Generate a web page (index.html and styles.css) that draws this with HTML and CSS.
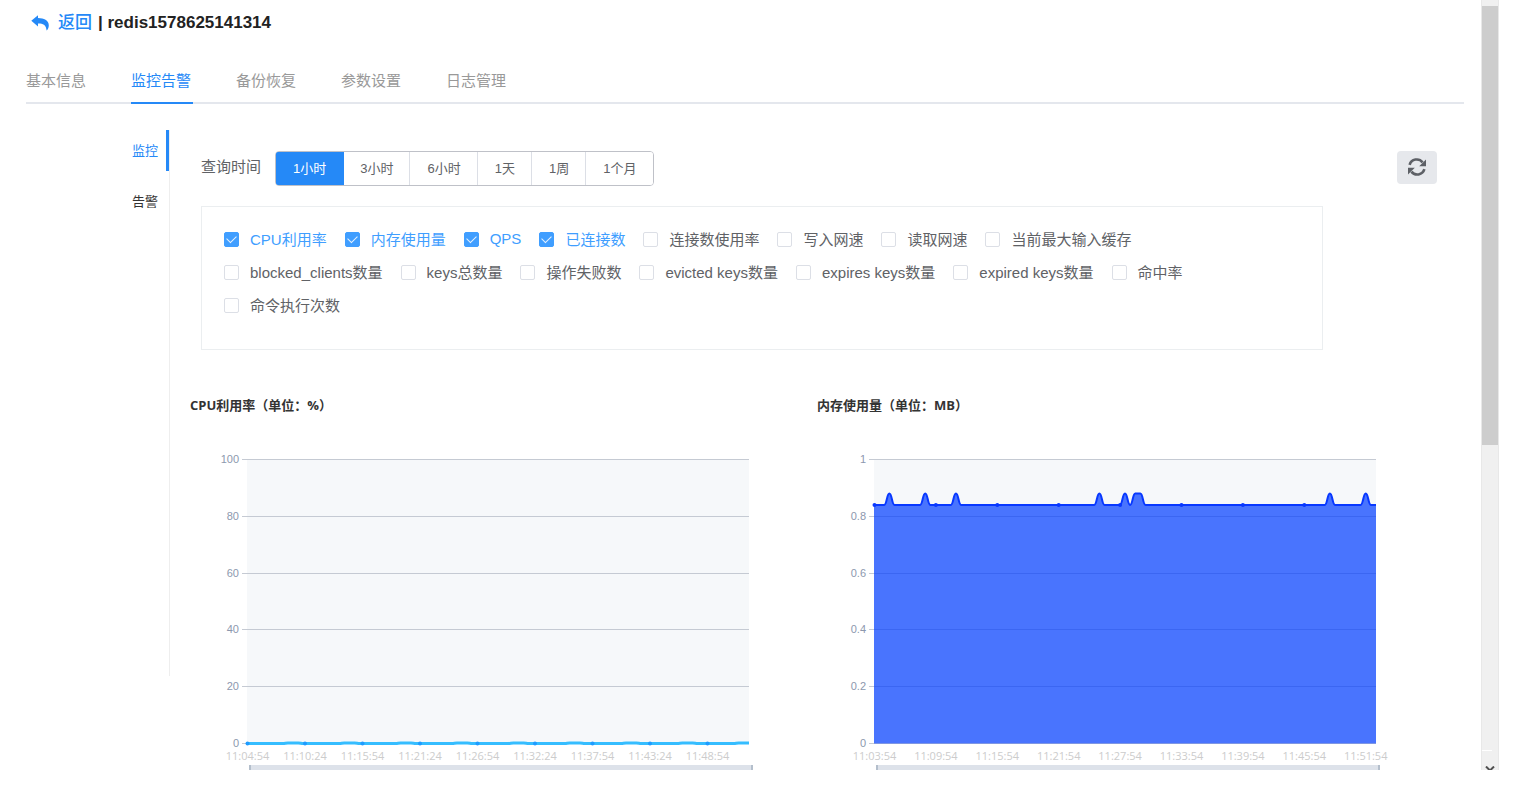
FILE: index.html
```html
<!DOCTYPE html>
<html lang="zh-CN">
<head>
<meta charset="utf-8">
<title>redis1578625141314</title>
<link rel="stylesheet" href="styles.css">
</head>
<body>
<div class="frame">
  <main class="page">
    <header class="title-bar">
      <a class="back" href="#">
        <svg class="back-icon" viewBox="0 0 18 16" aria-hidden="true"><path d="M7 0.2 L0.3 5.8 L7 11.4 V8.4 C11.4 8.3 15.2 9.2 15.6 15.6 C16.8 14.6 17.8 12.6 17.8 10.2 C17.6 5.2 13 3.2 7 3.1 Z"/></svg>
        <span>返回</span>
      </a>
      <h1 class="instance">| redis1578625141314</h1>
    </header>
    <nav class="tabs">
      <a class="tab" href="#">基本信息</a>
      <a class="tab tab-active" href="#">监控告警</a>
      <a class="tab" href="#">备份恢复</a>
      <a class="tab" href="#">参数设置</a>
      <a class="tab" href="#">日志管理</a>
    </nav>
    <div class="body">
      <nav class="side">
        <a class="side-item side-active" href="#">监控</a>
        <a class="side-item" href="#">告警</a>
      </nav>
      <section class="content">
        <div class="toolbar">
          <span class="toolbar-label">查询时间</span>
          <div class="range">
            <button class="range-btn range-on" type="button">1小时</button>
            <button class="range-btn" type="button">3小时</button>
            <button class="range-btn" type="button">6小时</button>
            <button class="range-btn" type="button">1天</button>
            <button class="range-btn" type="button">1周</button>
            <button class="range-btn" type="button">1个月</button>
          </div>
          <button class="refresh" type="button" aria-label="刷新">
            <svg class="refresh-icon" viewBox="0 0 18 18" aria-hidden="true">
              <path class="arc" d="M1.6 6.8 A7.4 7.4 0 0 1 14.6 4.4"/>
              <path class="arc" d="M16.4 11.2 A7.4 7.4 0 0 1 3.4 13.6"/>
              <path class="head" d="M18 1.6 V8.2 H11.2 Z"/>
              <path class="head" d="M0 16.4 V9.8 H6.8 Z"/>
            </svg>
          </button>
        </div>
        <div class="metrics">
          <label class="metric"><input type="checkbox" checked><span>CPU利用率</span></label>
          <label class="metric"><input type="checkbox" checked><span>内存使用量</span></label>
          <label class="metric"><input type="checkbox" checked><span>QPS</span></label>
          <label class="metric"><input type="checkbox" checked><span>已连接数</span></label>
          <label class="metric"><input type="checkbox"><span>连接数使用率</span></label>
          <label class="metric"><input type="checkbox"><span>写入网速</span></label>
          <label class="metric"><input type="checkbox"><span>读取网速</span></label>
          <label class="metric"><input type="checkbox"><span>当前最大输入缓存</span></label>
          <label class="metric"><input type="checkbox"><span>blocked_clients数量</span></label>
          <label class="metric"><input type="checkbox"><span>keys总数量</span></label>
          <label class="metric"><input type="checkbox"><span>操作失败数</span></label>
          <label class="metric"><input type="checkbox"><span>evicted keys数量</span></label>
          <label class="metric"><input type="checkbox"><span>expires keys数量</span></label>
          <label class="metric"><input type="checkbox"><span>expired keys数量</span></label>
          <label class="metric"><input type="checkbox"><span>命中率</span></label>
          <label class="metric"><input type="checkbox"><span>命令执行次数</span></label>
        </div>
        <div class="charts">
          <article class="chart">
            <h2 class="chart-title">CPU利用率（单位：%）</h2>
            <svg class="plot" id="cpu" viewBox="0 0 627 360" role="img" aria-label="CPU利用率"></svg>
          </article>
          <article class="chart">
            <h2 class="chart-title">内存使用量（单位：MB）</h2>
            <svg class="plot" id="memory" viewBox="0 0 627 360" role="img" aria-label="内存使用量"></svg>
          </article>
        </div>
      </section>
    </div>
  </main>
  <div class="scrollbar" aria-hidden="true">
    <div class="cap"></div>
    <div class="thumb"></div>
    <div class="seam"></div>
    <svg class="down" viewBox="0 0 10 6"><path d="M1 0.5 L5 4.5 L9 0.5"/></svg>
  </div>
</div>
<script src="charts.js"></script>
</body>
</html>
```

FILE: styles.css
```css
* { box-sizing: border-box; }

body {
  margin: 0;
  height: 100vh;
  padding: 0 21px 28px 0;
  background: #fff;
  color: #606266;
  font-family: "Liberation Sans", "Noto Sans CJK SC", sans-serif;
  font-size: 15px;
  overflow: hidden;
}

a { color: inherit; text-decoration: none; }
button { font-family: inherit; cursor: pointer; }

.frame { display: flex; height: 100%; overflow: hidden; }
.page { flex: 1; min-width: 0; padding: 0 17px 0 26px; }

.title-bar {
  display: flex;
  align-items: center;
  gap: 6px;
  height: 45px;
  padding-left: 5px;
  font-size: 17px;
}
.back { display: flex; align-items: center; gap: 9px; color: #2589f7; font-weight: 500; line-height: 20px; }
.back-icon { width: 18px; height: 16px; fill: #2589f7; }
.instance { margin: 0; color: #222; font-size: 17px; font-weight: 700; line-height: 20px; }

.tabs {
  display: flex;
  gap: 43px;
  height: 59px;
  border-bottom: 2px solid #e4e7ed;
}
.tab {
  min-width: 62px;
  height: 59px;
  padding-top: 25px;
  line-height: 22px;
  color: #999;
}
.tab-active { color: #2589f7; border-bottom: 2px solid #2589f7; }

.body { display: flex; align-items: flex-start; padding-top: 26px; }
.side {
  display: flex;
  flex-direction: column;
  gap: 10px;
  width: 144px;
  min-height: 546px;
  border-right: 1px solid #eee;
}
.side-item {
  height: 41px;
  padding-right: 8px;
  border-right: 3px solid transparent;
  color: #333;
  font-size: 13px;
  line-height: 41px;
  text-align: right;
}
.side-active { color: #2589f7; border-right-color: #2589f7; }

.content { flex: 1; min-width: 0; padding: 21px 20px 0; }

.toolbar { display: flex; align-items: flex-start; padding: 0 7px 0 11px; }
.toolbar-label { width: 74px; line-height: 31px; }
.range {
  display: flex;
  border: 1px solid #bfc1c8;
  border-radius: 4px;
  overflow: hidden;
}
.range-btn {
  height: 33px;
  padding: 0 17px 2px;
  border: 0;
  background: #fff;
  box-shadow: inset -1px 0 #dcdfe6;
  color: #606266;
  font-size: 13px;
}
.range-btn:last-child { box-shadow: none; }
.range-on { position: relative; background: #2589f7; color: #fff; box-shadow: 0 0 0 1px #2589f7; }
.refresh {
  display: flex;
  align-items: center;
  justify-content: center;
  width: 40px;
  height: 33px;
  margin-left: auto;
  padding: 0 0 1px;
  border: 0;
  border-radius: 4px;
  background: #e6e8ec;
}
.refresh-icon { width: 18px; height: 18px; }
.arc { fill: none; stroke: #5d6066; stroke-width: 2.6; }
.head { fill: #5d6066; }

.metrics {
  display: flex;
  flex-wrap: wrap;
  column-gap: 18px;
  margin: 20px 121px 0 11px;
  padding: 16px 22px 27px;
  border: 1px solid #ebeef0;
}
.metric { display: flex; align-items: center; gap: 11px; height: 33px; }
.metric span { padding-bottom: 2px; }
.metric input {
  appearance: none;
  width: 15px;
  height: 15px;
  margin: 0;
  border: 1px solid #dcdfe6;
  border-radius: 2px;
  background: #fff;
}
.metric input:checked { display: grid; place-items: center; border-color: #409eff; background: #409eff; }
.metric input:checked::before {
  content: "";
  width: 8px;
  height: 5px;
  margin-bottom: 3px;
  border: solid #e4f1ff;
  border-width: 0 0 1px 1px;
  rotate: -45deg;
}
.metric input:checked + span { color: #409eff; }

.charts { display: grid; grid-template-columns: 1fr 1fr; margin-top: 45px; }
.chart-title {
  margin: 0;
  color: #333;
  font-family: "Open Sans", "Noto Sans CJK SC", sans-serif;
  font-size: 13px;
  font-weight: 700;
  line-height: 20px;
}
.plot { display: block; width: 100%; margin-top: 15px; }
.plot-bg { fill: #f6f8fa; }
.grid { stroke: #c5cad3; stroke-width: 1; }
.y-label { fill: #8c98ae; font: 11px "Liberation Sans", sans-serif; text-anchor: end; }
.x-label { fill: #ccc; font: 11px "Open Sans", sans-serif; text-anchor: middle; }
.line { fill: none; stroke-width: 2; }
.line-cpu { stroke: #35bdff; stroke-width: 3; }
.dot-cpu { fill: #1f9bff; }
.line-memory { stroke: #0838ff; }
.dot-memory { fill: #0838ff; }
.area-memory { fill: #003cff; fill-opacity: 0.7; }
.zoom-track { fill: #dde2ea; }
.zoom-handle { fill: #b4bfcc; }

.scrollbar {
  position: relative;
  width: 18px;
  border: solid #e8e8e8;
  border-width: 0 1px;
  background: #f0f0f0;
}
.cap { height: 6px; }
.thumb { height: 57%; background: #cdcdcd; }
.seam { position: absolute; left: 0; bottom: 19px; width: 10px; height: 1px; background: #fff; }
.down { position: absolute; left: 3px; bottom: -2px; width: 10px; height: 6px; }
.down path { fill: none; stroke: #505050; stroke-width: 2; }
```

FILE: charts.js
```js
const LEFT = 57, RIGHT = 559, TOP = 29.5, BOTTOM = 313.5;

function draw(id, chart) {
  const y = v => BOTTOM - v / chart.max * (BOTTOM - TOP);
  const out = [`<rect class="plot-bg" x="${LEFT}" y="${TOP}" width="${RIGHT - LEFT}" height="${BOTTOM - TOP}"/>`];
  chart.ticks.forEach(t => {
    const gy = Math.floor(y(t)) + 0.5;
    out.push(`<line class="grid" x1="${LEFT - 5}" x2="${RIGHT}" y1="${gy}" y2="${gy}"/>`);
    out.push(`<text class="y-label" x="${LEFT - 8}" y="${gy + 3.5}">${t}</text>`);
  });
  const last = chart.values.length - 1;
  const x = i => LEFT + i / last * (RIGHT - LEFT);
  let path = `M${x(0)} ${y(chart.values[0])}`;
  for (let i = 1; i <= last; i++) {
    const mid = (x(i - 1) + x(i)) / 2;
    path += ` C${mid} ${y(chart.values[i - 1])} ${mid} ${y(chart.values[i])} ${x(i)} ${y(chart.values[i])}`;
  }
  if (chart.area) out.push(`<path class="area-${id}" d="${path} V${BOTTOM} H${LEFT} Z"/>`);
  out.push(`<path class="line line-${id}" d="${path}"/>`);
  chart.times.forEach((t, i) => {
    const tx = LEFT + 0.5 + i * chart.step;
    if (tx < RIGHT - 15) out.push(`<circle class="dot-${id}" cx="${tx}" cy="${y(chart.values[0])}" r="2"/>`);
    out.push(`<text class="x-label" x="${tx}" y="330">${t}</text>`);
  });
  out.push('<rect class="zoom-track" x="60" y="335" width="503" height="25"/>');
  out.push('<rect class="zoom-handle" x="59" y="335" width="2" height="25"/>');
  out.push('<rect class="zoom-handle" x="561" y="335" width="2" height="25"/>');
  document.getElementById(id).innerHTML = out.join('');
}

const peaks = [3, 10, 16, 44, 49, 51, 52, 89, 96];

draw('cpu', {
  max: 100,
  ticks: [0, 20, 40, 60, 80, 100],
  values: Array.from({ length: 99 }, (_, i) => i % 11 > 7 ? 0.2 : 0),
  step: 57.5,
  times: ['11:04:54', '11:10:24', '11:15:54', '11:21:24', '11:26:54', '11:32:24', '11:37:54', '11:43:24', '11:48:54']
});

draw('memory', {
  max: 1,
  ticks: [0, 0.2, 0.4, 0.6, 0.8, 1],
  values: Array.from({ length: 99 }, (_, i) => peaks.includes(i) ? 0.88 : 0.84),
  area: true,
  step: 61.4,
  times: ['11:03:54', '11:09:54', '11:15:54', '11:21:54', '11:27:54', '11:33:54', '11:39:54', '11:45:54', '11:51:54']
});
```
